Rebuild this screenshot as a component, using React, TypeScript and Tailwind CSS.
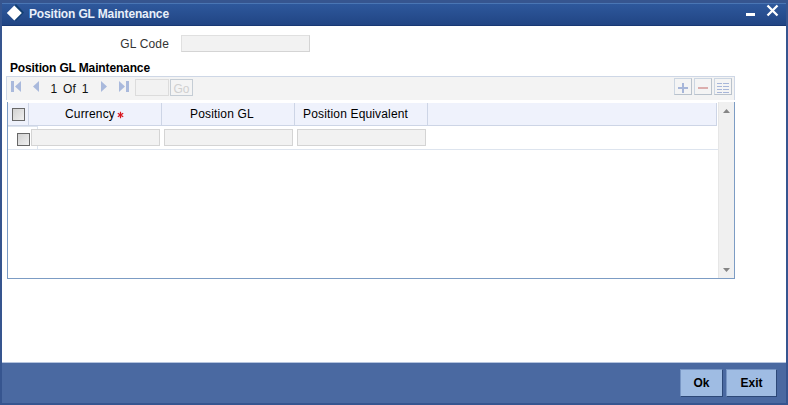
import React from "react";

function CheckBox({ className = "" }: { className?: string }) {
  return (
    <span
      className={`block h-[13px] w-[13px] shrink-0 border border-[#686868] bg-linear-to-br from-[#d2d2d2] to-[#f0f0f0] ${className}`}
    />
  );
}

function Field({ className = "" }: { className?: string }) {
  return (
    <span className={`block h-[17px] w-[129px] shrink-0 border border-[#d4d4d4] bg-[#f2f2f2] ${className}`} />
  );
}

function ToolButton({ children }: { children: React.ReactNode }) {
  return (
    <span className="block h-[17px] w-[18px] border border-t-[#ccd6e2] border-l-[#ccd6e2] border-r-[#b9c2cc] border-b-[#b9c2cc] bg-[#f4f4f4]">
      <svg width="16" height="15" viewBox="0 0 16 15" shapeRendering="crispEdges" className="block">
        {children}
      </svg>
    </span>
  );
}

function Triangle({ left }: { left?: boolean }) {
  return left ? <path d="M6 0V11L0 5.5Z" /> : <path d="M0 0V11L6 5.5Z" />;
}

const headCell = "flex h-full w-[133px] shrink-0 items-center border-r border-[#cdd5e6]";

export default function App() {
  return (
    <div className="flex h-[405px] w-[788px] flex-col overflow-hidden border-x-2 border-t-[3px] border-b-2 border-[#36558f] bg-white font-['Liberation_Sans',Arial,sans-serif] text-[12px] leading-[14px] text-black">
      <header className="flex h-[23px] shrink-0 border-t border-b border-t-[#4a76b4] border-b-[#183874] bg-linear-to-b from-[#2e589c] to-[#214584]">
        <svg width="18" height="18" viewBox="0 0 18 18" className="ml-[4px] block">
          <path d="M10 0L18 8.5L10 17L8 15L14 9L8 2Z" fill="#123f72" />
          <path d="M8.3 1.5L15.8 9L8.3 16.5L0.8 9Z" fill="#fff" />
        </svg>
        <span className="mt-[3px] ml-[5px] font-bold tracking-[-0.14px] text-[#e9f0fa]">Position GL Maintenance</span>
        <svg width="34" height="16" viewBox="0 0 34 16" className="mr-[6px] ml-auto block">
          <path d="M0 9H9V12H0Z" fill="#fff" />
          <path d="M21.5 1.5L31.5 11.5M31.5 1.5L21.5 11.5" stroke="#fff" strokeWidth="2.3" fill="none" />
        </svg>
      </header>

      <main className="flex h-[336px] shrink-0 flex-col">
        <div className="flex pt-[9px]">
          <span className="mt-[2px] w-[167px] text-right tracking-[0.15px] text-[#333]">GL Code</span>
          <Field className="ml-[12px] border-t-[#e0e0e0] border-l-[#e0e0e0]" />
        </div>
        <h2 className="mt-[9px] ml-[8px] h-[15px] font-bold tracking-[-0.14px]">Position GL Maintenance</h2>

        <div className="ml-[4px] flex h-[24px] w-[729px] shrink-0 border-x border-t border-[#ced7e6] bg-[#f3f3f3]">
          <svg width="124" height="20" viewBox="0 0 124 20" className="block shrink-0" fill="#a9b9dc">
            <path d="M4 4H7V15H4Z" />
            <g transform="translate(8 4)"><Triangle left /></g>
            <g transform="translate(26 4)"><Triangle left /></g>
            <g transform="translate(94 4)"><Triangle /></g>
            <g transform="translate(112 4)"><Triangle /></g>
            <path d="M119 4H122V15H119Z" />
            <text x="43.5" y="16" fill="#111" fontSize="12" wordSpacing="2.6">1 Of 1</text>
          </svg>
          <span className="mt-[2px] ml-[4px] block h-[17px] w-[34px] border border-[#dcdcdc] bg-[#f2f2f2]" />
          <span className="mt-[2px] ml-[1px] flex h-[17px] w-[23px] justify-center border border-[#c5cdd5] bg-[#f4f4f4] pt-[2px] text-[#d0d0d0]">
            Go
          </span>
          <div className="mt-[1px] mr-[2px] ml-auto flex gap-[2px]">
            <ToolButton>
              <path d="M3 8H13V10H3ZM7 4H9V14H7Z" fill="#a7b6d9" />
            </ToolButton>
            <ToolButton>
              <path d="M3 8H13V10H3Z" fill="#dcaead" />
            </ToolButton>
            <ToolButton>
              <path
                d="M2 4H7V5H2ZM8 4H14V5H8ZM2 7H7V8H2ZM8 7H14V8H8ZM2 10H7V11H2ZM8 10H14V11H8ZM2 13H7V14H2ZM8 13H14V14H8Z"
                fill="#a7b6d9"
              />
            </ToolButton>
          </div>
        </div>

        <div className="mt-[2px] ml-[5px] flex h-[177px] w-[728px] shrink-0 border-x border-b border-[#7c9cc4]">
          <div className="flex w-[710px] flex-col">
            <div className="mt-px flex h-[23px] w-[709px] shrink-0 border-r border-b border-[#cdd5e6] bg-[#eff2fc] tracking-[0.16px]">
              <div className="flex h-full w-[21px] shrink-0 border-r border-[#cdd5e6] pt-[5px] pl-[4px]">
                <CheckBox />
              </div>
              <div className={`${headCell} pl-[36px]`}>
                Currency
                <svg width="7" height="8" viewBox="0 0 7 8" className="mt-[2px] ml-[2px] block shrink-0" stroke="#d8141c" strokeWidth="1.2">
                  <path d="M3.5 0.8V7.2M0.8 2.2L6.2 5.8M6.2 2.2L0.8 5.8" />
                </svg>
              </div>
              <div className={`${headCell} pl-[28px]`}>Position GL</div>
              <div className={`${headCell} pl-[8px]`}>Position Equivalent</div>
            </div>
            <div className="flex h-[24px] shrink-0 border-b border-[#dde4ee]">
              <div className="h-full w-[30px] shrink-0 border-t border-r border-[#dde4ee] pt-[6px] pl-[9px]">
                <CheckBox />
              </div>
              <div className="mt-[3px] -ml-[7px] flex h-[17px] gap-[4px]">
                <Field />
                <Field />
                <Field />
              </div>
            </div>
          </div>
          <div className="flex w-[16px] flex-col items-center justify-between border-l border-[#e6e6e6] bg-[#f0f0f0] pt-[7px] pb-[6px]">
            <svg width="7" height="4" viewBox="0 0 7 4" fill="#858585"><path d="M0 4L3.5 0L7 4Z" /></svg>
            <svg width="7" height="4" viewBox="0 0 7 4" fill="#858585"><path d="M0 0L3.5 4L7 0Z" /></svg>
          </div>
        </div>
      </main>

      <footer className="flex h-[41px] shrink-0 justify-end gap-[3px] border-t border-[#b5c4de] bg-[#4a69a1] pt-[6px] pr-[9px] font-bold">
        <button className="h-[28px] w-[43px] border border-t-[#7795c4] border-l-[#7795c4] border-r-[#2c4878] border-b-[#2c4878] bg-[#9fbce3]">
          Ok
        </button>
        <button className="h-[28px] w-[51px] border border-t-[#7795c4] border-l-[#7795c4] border-r-[#2c4878] border-b-[#2c4878] bg-[#9fbce3]">
          Exit
        </button>
      </footer>
    </div>
  );
}
